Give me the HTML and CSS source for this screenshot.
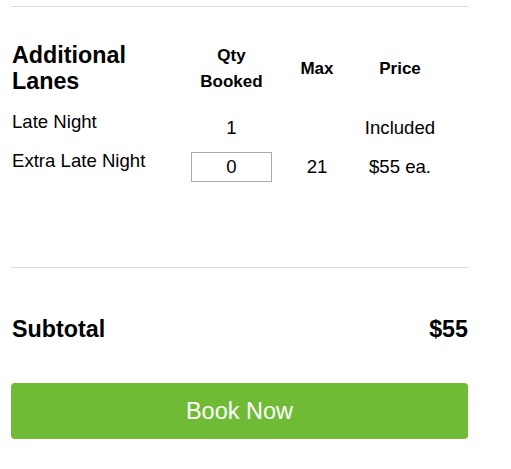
FILE: index.html
```html
<!DOCTYPE html>
<html>
<head>
<meta charset="utf-8">
<link rel="stylesheet" href="styles.css">
</head>
<body>
<div class="panel">
  <div class="rule rule-top"></div>
  <div class="lanes">
    <div class="row head">
      <div class="cell label title">Additional<br>Lanes</div>
      <div class="cell col-h">Qty<br>Booked</div>
      <div class="cell col-h">Max</div>
      <div class="cell col-h">Price</div>
    </div>
    <div class="row r1">
      <div class="cell label">Late Night</div>
      <div class="cell">1</div>
      <div class="cell"></div>
      <div class="cell">Included</div>
    </div>
    <div class="row r2">
      <div class="cell label">Extra Late Night</div>
      <div class="cell"><input class="qty" type="text" value="0"></div>
      <div class="cell">21</div>
      <div class="cell">$55 ea.</div>
    </div>
  </div>
  <div class="rule rule-mid"></div>
  <div class="subtotal">
    <span>Subtotal</span>
    <span>$55</span>
  </div>
  <button class="book">Book Now</button>
</div>
</body>
</html>
```

FILE: styles.css
```css
html, body {
  margin: 0;
  padding: 0;
  background: #fff;
}
body {
  font-family: "Liberation Sans", Arial, sans-serif;
  color: #000;
}
.panel {
  width: 457px;
  margin-left: 11px;
}
.rule {
  height: 1px;
  background: #dcdcdc;
}
.rule-top {
  margin-top: 6px;
}
.lanes {
  margin-top: 35px;
  display: flex;
  flex-direction: column;
  gap: 5px;
}
.row {
  display: grid;
  grid-template-columns: 180px 81px 90px 76px;
  align-items: center;
  font-size: 18.6px;
  line-height: 22px;
}
.cell {
  text-align: center;
}
.cell.label {
  text-align: left;
  align-self: start;
  padding-left: 1px;
}
.head {
  margin-bottom: 11px;
}
.title {
  font-size: 23.3px;
  font-weight: bold;
  line-height: 26px;
  align-self: center;
}
.col-h {
  font-size: 17px;
  font-weight: bold;
  line-height: 26px;
  padding-top: 1px;
}
.r1 {
  min-height: 34px;
}
.r2 {
  min-height: 34px;
}
.qty {
  box-sizing: border-box;
  width: 81px;
  height: 30px;
  border: 1px solid #a9a9a9;
  margin: 0;
  padding: 0;
  text-align: center;
  font-family: "Liberation Sans", Arial, sans-serif;
  font-size: 18.6px;
  color: #000;
  display: block;
}
.rule-mid {
  margin-top: 83px;
}
.subtotal {
  margin-top: 47px;
  display: flex;
  justify-content: space-between;
  font-size: 23.3px;
  font-weight: bold;
  line-height: 28px;
  padding-left: 1px;
}
.book {
  display: block;
  margin-top: 40px;
  width: 457px;
  height: 56px;
  border: none;
  border-radius: 4px;
  background: #6fbb36;
  color: #fff;
  font-family: "Liberation Sans", Arial, sans-serif;
  font-size: 23.5px;
  padding: 0;
}
```
